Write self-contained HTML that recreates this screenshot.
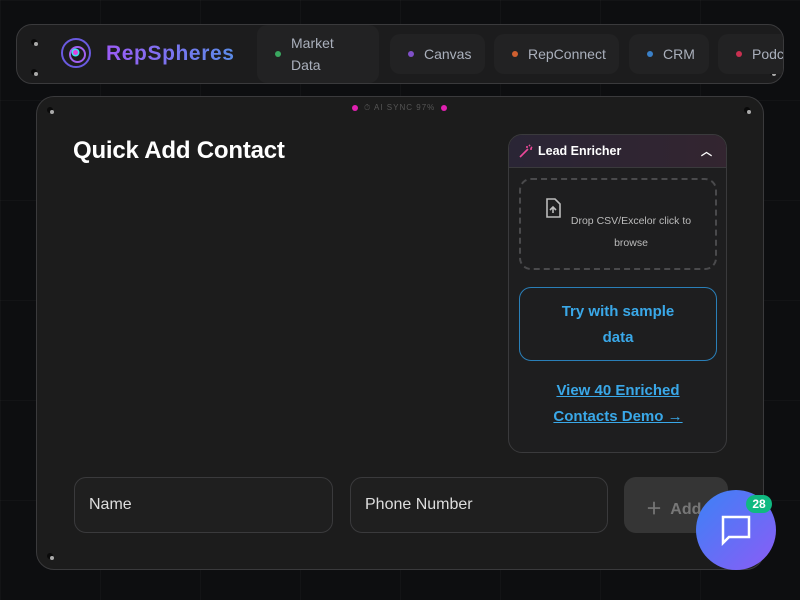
<!DOCTYPE html>
<html><head><style>
*{box-sizing:border-box;margin:0;padding:0}
body{width:800px;height:600px;overflow:hidden;background:#0d0e10;font-family:"Liberation Sans",sans-serif;position:relative;
background-image:linear-gradient(rgba(255,255,255,.025) 1px,transparent 1px),linear-gradient(90deg,rgba(255,255,255,.025) 1px,transparent 1px);background-size:100px 100px}
.nav{position:absolute;left:16px;top:24px;width:768px;height:60px;border-radius:16px;background:#1c1c1d;border:1px solid #3a3a3c;overflow:hidden}
.screw{position:absolute;width:6px;height:6px;border-radius:50%;background:#0a0a0a}
.screw:after{content:"";position:absolute;left:3px;top:3px;width:4px;height:4px;border-radius:50%;background:#aaa}
.logo{position:absolute;left:44px;top:13px;width:30px;height:30px;border-radius:50%;border:2.5px solid #6a5ae0}
.logo:before{content:"";position:absolute;left:6px;top:6px;width:13px;height:13px;border-radius:50%;border:2px solid #a060f0}
.logo:after{content:"";position:absolute;left:10px;top:10px;width:5px;height:5px;border-radius:50%;background:#e040e0;box-shadow:0 0 0 1.5px #40e0f0}
.brand{position:absolute;left:89px;top:17px;font-size:21px;font-weight:bold;letter-spacing:.6px;background:linear-gradient(90deg,#9b5cf6,#5a8ce8);-webkit-background-clip:text;color:transparent}
.tab{position:absolute;top:9px;height:40px;border-radius:10px;background:#222223;color:#aab0bc;font-size:14px;display:flex;align-items:center}
.dot{width:6px;height:6px;border-radius:50%;margin:0 10px 0 18px}
.card{position:absolute;left:36px;top:96px;width:728px;height:474px;border-radius:18px;background:#1c1c1c;border:1px solid #3a3a3c}
h1{position:absolute;left:36px;top:40px;color:#fff;font-size:24px;font-weight:bold;letter-spacing:-.2px}
.sync{position:absolute;left:315px;top:6px;font-size:8px;color:#555;letter-spacing:1px;display:flex;align-items:center;gap:6px}
.pd{width:6px;height:6px;border-radius:50%;background:#e020b0}
.le{position:absolute;left:471px;top:37px;width:219px;height:319px;border-radius:14px;background:#1e1e1f;border:1px solid #3a3a3c;overflow:hidden}
.leh{height:33px;background:linear-gradient(90deg,#2a2535,#332530);border-bottom:1px solid #3a3a3c;color:#fff;font-size:12.5px;font-weight:bold;display:flex;align-items:center;padding-left:29px;position:relative}
.drop{position:absolute;left:10px;top:43px;width:198px;height:92px;border:2px dashed #4a4a4c;border-radius:12px;color:#bbb;font-size:10.5px;text-align:center;line-height:22px;padding:30px 10px 0 36px}
.try{position:absolute;left:10px;top:152px;width:198px;height:74px;border:1px solid #2a7fb8;border-radius:12px;color:#3aa8e8;font-size:15px;font-weight:bold;text-align:center;line-height:26px;padding-top:11px}
.view{position:absolute;left:6px;top:243px;width:206px;text-align:center;color:#3aa8e8;font-size:15px;font-weight:bold;text-decoration:underline;line-height:26px}
.in{position:absolute;top:380px;height:56px;border-radius:12px;border:1px solid #3a3a3c;background:#1f1f1f;color:#ddd;font-size:16px;padding:18px 14px}
.add{position:absolute;left:587px;top:380px;width:104px;height:56px;border-radius:12px;background:#353535;color:#777;font-size:16px;font-weight:bold;padding:18px 22px}
.chat{position:absolute;left:696px;top:490px;width:80px;height:80px;border-radius:50%;background:linear-gradient(135deg,#3b82f6,#8b5cf6)}
.badge{position:absolute;left:746px;top:495px;width:26px;height:18px;border-radius:9px;background:#10b981;color:#fff;font-size:12px;font-weight:bold;text-align:center;line-height:18px}
</style></head><body>
<div class="nav">
<div class="screw" style="left:14px;top:14px"></div><div class="screw" style="left:14px;top:44px"></div>
<div class="screw" style="left:752px;top:14px"></div><div class="screw" style="left:752px;top:44px"></div>
<div class="logo"></div>
<div class="brand">RepSpheres</div>
<div class="tab" style="left:240px;width:122px;height:58px;top:0;line-height:22px"><span class="dot" style="background:#3aa860"></span>Market<br>Data</div>
<div class="tab" style="left:373px;width:95px"><span class="dot" style="background:#8050c8"></span>Canvas</div>
<div class="tab" style="left:477px;width:125px"><span class="dot" style="background:#d06030"></span>RepConnect</div>
<div class="tab" style="left:612px;width:80px"><span class="dot" style="background:#3a80c8"></span>CRM</div>
<div class="tab" style="left:701px;width:90px"><span class="dot" style="background:#c83050"></span>Podcast</div>
</div>
<div class="card">
<div class="screw" style="left:10px;top:10px"></div><div class="screw" style="left:707px;top:10px"></div>
<div class="screw" style="left:10px;top:456px"></div><div class="screw" style="left:707px;top:456px"></div>
<div class="sync"><span class="pd"></span>⏱ AI SYNC 97%<span class="pd"></span></div>
<h1>Quick Add Contact</h1>
<div class="le">
<div class="leh"><svg style="position:absolute;left:10px;top:9px" width="14" height="14" viewBox="0 0 14 14" fill="none" stroke="#ec4899" stroke-width="1.6"><path d="M1 13l8-8M8 2v2M11 5h2M10 1l1 1M12 3l1 1"/></svg>Lead Enricher<span style="position:absolute;right:14px;font-size:11px">︿</span></div>
<div class="drop"><svg style="position:absolute;left:24px;top:18px" width="16" height="20" viewBox="0 0 16 20" fill="none" stroke="#bbb" stroke-width="1.6"><path d="M2 1h8l5 5v13H2z"/><path d="M8 15V9M5 12l3-3 3 3"/></svg>Drop CSV/Excelor click to browse</div>
<div class="try">Try with sample<br>data</div>
<div class="view">View 40 Enriched<br>Contacts Demo →</div>
</div>
<div class="in" style="left:37px;width:259px">Name</div>
<div class="in" style="left:313px;width:258px">Phone Number</div>
<div class="add">＋&nbsp; Add</div>
</div>
<div class="chat"><svg style="position:absolute;left:24px;top:24px" width="32" height="32" viewBox="0 0 32 32" fill="none" stroke="#fff" stroke-width="2.5"><path d="M3 3h26v20H9l-6 6z"/></svg></div>
<div class="badge">28</div>
</body></html>
